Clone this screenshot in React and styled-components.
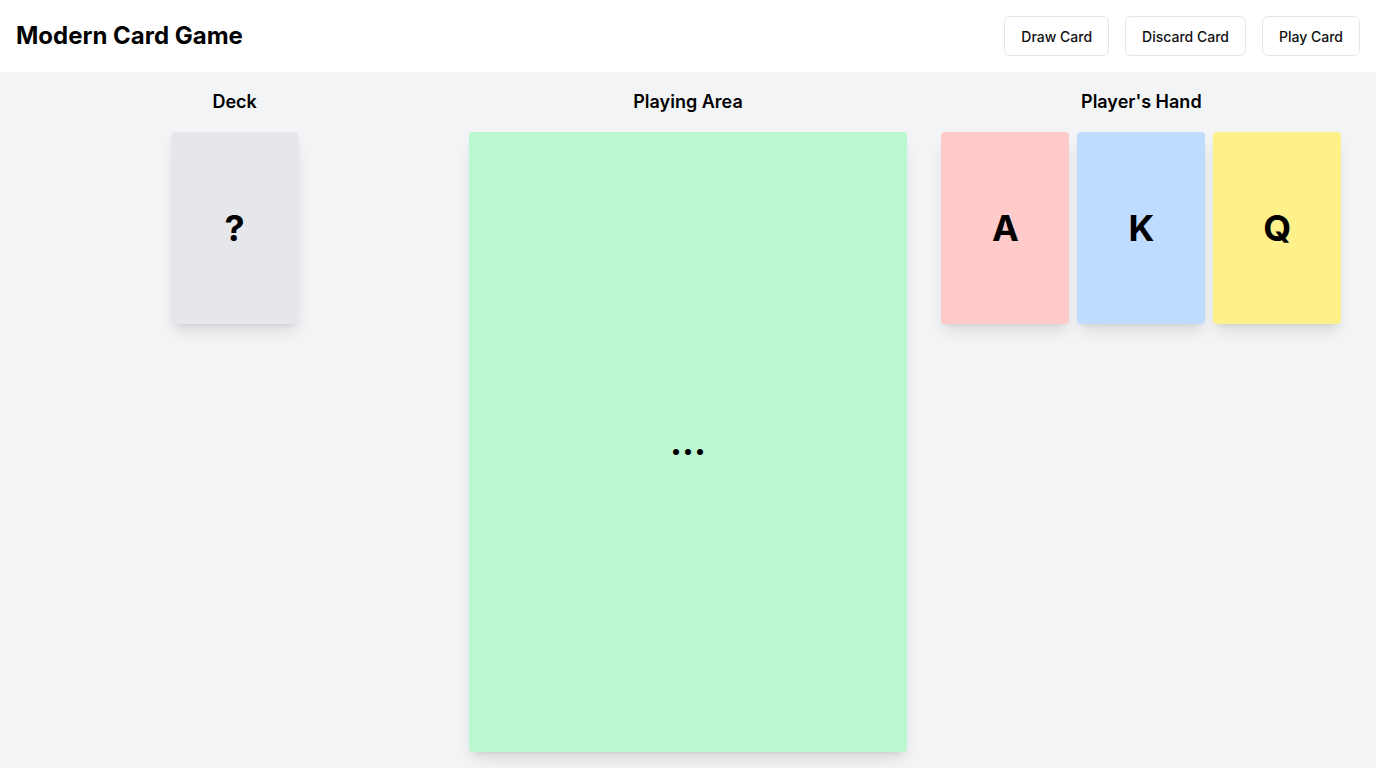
import React from 'react';
import styled, { createGlobalStyle } from 'styled-components';

const GlobalStyle = createGlobalStyle`
	* {
		box-sizing: border-box;
	}
	body {
		margin: 0;
		font-family: Inter, "Noto Sans", sans-serif;
		color: #000000;
		background: #f3f4f6;
	}
`;

const Page = styled.div`
	display: flex;
	flex-direction: column;
	height: 100vh;
`;

const Header = styled.header`
	display: flex;
	align-items: center;
	justify-content: space-between;
	height: 72px;
	padding: 0 16px;
	background: #ffffff;
	flex-shrink: 0;
`;

const Title = styled.h1`
	margin: 0 0 2px;
	font-size: 24px;
	font-weight: 700;
`;

const Actions = styled.div`
	display: flex;
	gap: 16px;
`;

const Button = styled.button`
	height: 40px;
	padding: 0 16px;
	background: #ffffff;
	border: 1px solid #e5e7eb;
	border-radius: 6px;
	font-family: inherit;
	font-size: 14px;
	font-weight: 500;
	color: #111111;
	cursor: pointer;
`;

const Board = styled.main`
	flex: 1;
	display: grid;
	grid-template-columns: repeat(3, 1fr);
	gap: 16px;
	padding: 16px;
	min-height: 0;
`;

const Column = styled.section`
	display: flex;
	flex-direction: column;
	align-items: center;
	min-height: 0;
`;

const Heading = styled.h2`
	margin: 0 0 16px;
	font-size: 18px;
	line-height: 28px;
	font-weight: 600;
`;

const Card = styled.div`
	display: flex;
	align-items: center;
	justify-content: center;
	width: 128px;
	height: 192px;
	border-radius: 4px;
	background: ${(p) => p.$bg};
	box-shadow: 0 10px 15px -3px rgba(0, 0, 0, 0.1), 0 4px 6px -4px rgba(0, 0, 0, 0.1);
	font-size: 36px;
	line-height: 40px;
	font-weight: 700;
`;

const PlayArea = styled.div`
	flex: 1;
	width: 100%;
	display: flex;
	align-items: center;
	justify-content: center;
	border-radius: 4px;
	background: #bbf7d0;
	box-shadow: 0 10px 15px -3px rgba(0, 0, 0, 0.1), 0 4px 6px -4px rgba(0, 0, 0, 0.1);
	font-size: 36px;
	line-height: 40px;
	font-weight: 700;
`;

const Hand = styled.div`
	display: flex;
	gap: 8px;
`;

const hand = [
	{ rank: 'A', color: '#fecaca' },
	{ rank: 'K', color: '#bfdbfe' },
	{ rank: 'Q', color: '#fef08a' },
];

export default function App() {
	return (
		<Page>
			<GlobalStyle />
			<Header>
				<Title>Modern Card Game</Title>
				<Actions>
					<Button>Draw Card</Button>
					<Button>Discard Card</Button>
					<Button>Play Card</Button>
				</Actions>
			</Header>
			<Board>
				{/* deck */}
				<Column>
					<Heading>Deck</Heading>
					<Card $bg="#e5e7eb">?</Card>
				</Column>
				{/* table */}
				<Column>
					<Heading>Playing Area</Heading>
					<PlayArea>...</PlayArea>
				</Column>
				{/* hand */}
				<Column>
					<Heading>Player's Hand</Heading>
					<Hand>
						{hand.map((c) => (
							<Card key={c.rank} $bg={c.color}>
								{c.rank}
							</Card>
						))}
					</Hand>
				</Column>
			</Board>
		</Page>
	);
}
